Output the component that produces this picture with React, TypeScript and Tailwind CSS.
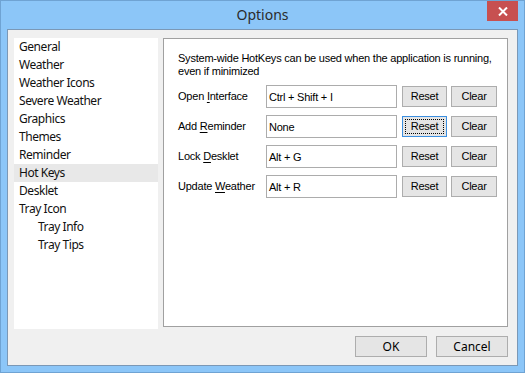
import React from "react";

const listItems = [
  { label: "General", indent: false },
  { label: "Weather", indent: false },
  { label: "Weather Icons", indent: false },
  { label: "Severe Weather", indent: false },
  { label: "Graphics", indent: false },
  { label: "Themes", indent: false },
  { label: "Reminder", indent: false },
  { label: "Hot Keys", indent: false },
  { label: "Desklet", indent: false },
  { label: "Tray Icon", indent: false },
  { label: "Tray Info", indent: true },
  { label: "Tray Tips", indent: true },
];

const hotkeys = [
  { pre: "Open ", key: "I", post: "nterface", value: "Ctrl + Shift + I" },
  { pre: "Add ", key: "R", post: "eminder", value: "None", focused: true },
  { pre: "Lock ", key: "D", post: "esklet", value: "Alt + G" },
  { pre: "Update ", key: "W", post: "eather", value: "Alt + R" },
];

const ui = { fontFamily: '"Noto Sans", "Open Sans", sans-serif' };
const classic = { fontFamily: '"Liberation Sans", Arial, sans-serif' };

const Button: React.FC<{ label: string; focused?: boolean; className: string }> = ({
  label,
  focused,
  className,
}) => (
  <div
    className={`flex items-center justify-center border bg-[#e5e5e5] text-black ${
      focused ? "border-[#3c8fe0]" : "border-[#adadad]"
    } ${className}`}
  >
    {focused ? (
      <div className="flex h-full w-full items-center justify-center p-[2px]">
        <div className="flex h-full w-full items-center justify-center border border-dotted border-black">
          {label}
        </div>
      </div>
    ) : (
      label
    )}
  </div>
);

export default function App() {
  return (
    <div className="flex h-[373px] w-[525px] flex-col border border-[#6fa3d3] bg-[#8cc6f8]">
      {/* title bar */}
      <div className="grid h-[28px] grid-cols-[1fr_auto_1fr] items-start">
        <div />
        <div className="pt-[4px] text-[14px] leading-[20px] text-[#2b2b2b]" style={ui}>
          Options
        </div>
        <div className="flex justify-end pr-[6px]">
          <div className="flex h-[20px] w-[31px] items-center justify-center bg-[#c75050]">
            <svg width="10" height="9" viewBox="0 0 10 9">
              <path d="M1 0.5 L9 8.5 M9 0.5 L1 8.5" stroke="#fff" strokeWidth="2" />
            </svg>
          </div>
        </div>
      </div>

      {/* client area */}
      <div className="mx-[6px] mb-[6px] flex flex-1 flex-col border border-[#7b98b6] bg-[#f0f0f0] pl-[6px] pr-[9px] pt-[8px]">
        <div className="flex h-[291px] gap-[5px]">
          {/* category list */}
          <div className="w-[144px] bg-white text-[12px] tracking-[-0.45px] text-[#111]" style={ui}>
            {listItems.map((item) => (
              <div
                key={item.label}
                className={`flex h-[18px] items-center leading-[18px] ${
                  item.indent ? "pl-[24px]" : "pl-[5px]"
                } ${item.label === "Hot Keys" ? "bg-[#e8e8e8]" : ""}`}
              >
                {item.label}
              </div>
            ))}
          </div>

          {/* hotkeys panel */}
          <div
            className="flex h-[289px] flex-1 flex-col border border-[#a0a0a0] bg-white pl-[14px] pt-[13px] text-[11px] tracking-[-0.22px] text-black"
            style={classic}
          >
            <p className="leading-[13px]">
              System-wide HotKeys can be used when the application is running,
              <br />
              even if minimized
            </p>
            <div className="mt-[7px] flex flex-col gap-[7px]">
              {hotkeys.map((h) => (
                <div key={h.value} className="flex h-[23px] items-center">
                  <div className="w-[88px]">
                    {h.pre}
                    <span className="underline underline-offset-2">{h.key}</span>
                    {h.post}
                  </div>
                  <div className="flex h-[23px] w-[131px] items-start border border-[#acacac] px-[2px] pt-[3px]">
                    {h.value}
                  </div>
                  <Button label="Reset" focused={h.focused} className="ml-[5px] h-[21px] w-[45px]" />
                  <Button label="Clear" className="ml-[4px] h-[21px] w-[46px]" />
                </div>
              ))}
            </div>
          </div>
        </div>

        {/* dialog buttons */}
        <div className="flex justify-end gap-[9px] pt-[7px] text-[12px]" style={ui}>
          <Button label="OK" className="h-[21px] w-[72px]" />
          <Button label="Cancel" className="h-[21px] w-[72px]" />
        </div>
      </div>
    </div>
  );
}
